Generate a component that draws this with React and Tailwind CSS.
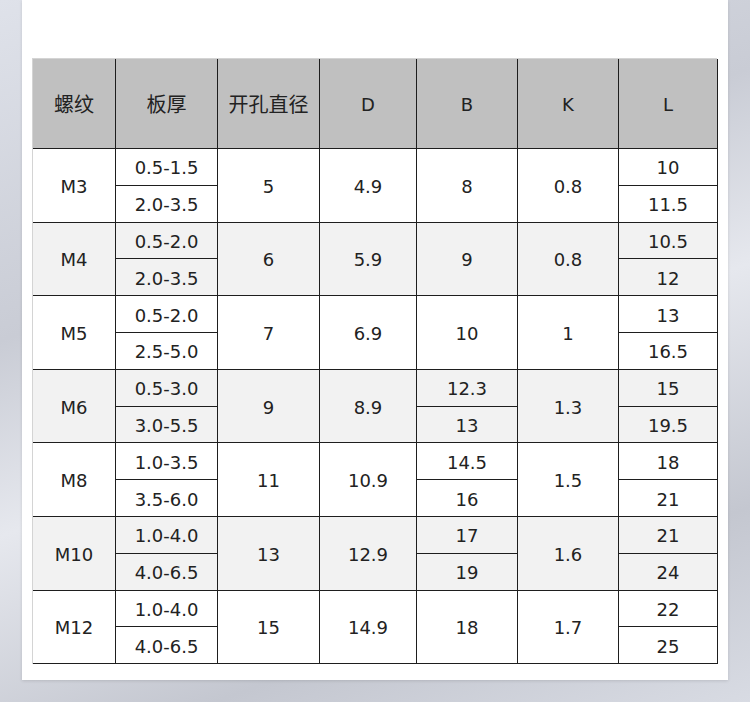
import React from "react";

const groups = [
  { m: "M3", t: ["0.5-1.5", "2.0-3.5"], h: "5", d: "4.9", b: ["8"], k: "0.8", l: ["10", "11.5"] },
  { m: "M4", t: ["0.5-2.0", "2.0-3.5"], h: "6", d: "5.9", b: ["9"], k: "0.8", l: ["10.5", "12"] },
  { m: "M5", t: ["0.5-2.0", "2.5-5.0"], h: "7", d: "6.9", b: ["10"], k: "1", l: ["13", "16.5"] },
  { m: "M6", t: ["0.5-3.0", "3.0-5.5"], h: "9", d: "8.9", b: ["12.3", "13"], k: "1.3", l: ["15", "19.5"] },
  { m: "M8", t: ["1.0-3.5", "3.5-6.0"], h: "11", d: "10.9", b: ["14.5", "16"], k: "1.5", l: ["18", "21"] },
  { m: "M10", t: ["1.0-4.0", "4.0-6.5"], h: "13", d: "12.9", b: ["17", "19"], k: "1.6", l: ["21", "24"] },
  { m: "M12", t: ["1.0-4.0", "4.0-6.5"], h: "15", d: "14.9", b: ["18"], k: "1.7", l: ["22", "25"] },
];

const heads = ["螺纹", "板厚", "开孔直径", "D", "B", "K", "L"];

function Cell({ children, span, bg }) {
  return (
    <div
      className={`${span ? "row-span-2" : ""} ${bg} flex items-center justify-center pt-[3px] border-r border-b border-[#1e1e1e] text-[18px] leading-none text-[#222]`}
    >
      {children}
    </div>
  );
}

export default function App() {
  const cells = [];
  heads.forEach((h, i) => {
    cells.push(
      <div
        key={"h" + i}
        className={`flex items-center justify-center pt-[3px] border-r border-b border-[#1e1e1e] bg-[#c0c0c0] leading-none text-[#222] ${i < 3 ? "text-[20px]" : "text-[18px]"}`}
      >
        {h}
      </div>
    );
  });
  groups.forEach((g, gi) => {
    const bg = gi % 2 === 1 ? "bg-[#f2f2f2]" : "bg-white";
    const bSplit = g.b.length === 2;
    cells.push(<Cell key={gi + "m"} span bg={bg}>{g.m}</Cell>);
    cells.push(<Cell key={gi + "t0"} bg={bg}>{g.t[0]}</Cell>);
    cells.push(<Cell key={gi + "h"} span bg={bg}>{g.h}</Cell>);
    cells.push(<Cell key={gi + "d"} span bg={bg}>{g.d}</Cell>);
    cells.push(<Cell key={gi + "b0"} span={!bSplit} bg={bg}>{g.b[0]}</Cell>);
    cells.push(<Cell key={gi + "k"} span bg={bg}>{g.k}</Cell>);
    cells.push(<Cell key={gi + "l0"} bg={bg}>{g.l[0]}</Cell>);
    cells.push(<Cell key={gi + "t1"} bg={bg}>{g.t[1]}</Cell>);
    if (bSplit) cells.push(<Cell key={gi + "b1"} bg={bg}>{g.b[1]}</Cell>);
    cells.push(<Cell key={gi + "l1"} bg={bg}>{g.l[1]}</Cell>);
  });

  return (
    <div
      className="w-[750px] h-[702px] overflow-hidden bg-[linear-gradient(160deg,#dfe2ea_0%,#c9ccd5_35%,#e6e8ee_55%,#c4c7d0_80%,#d8dbe3_100%)]"
      style={{ fontFamily: '"DejaVu Sans", "Noto Sans CJK SC", sans-serif' }}
    >
      <div className="ml-[22px] w-[706px] h-[680px] bg-white pt-[58px] pl-[10px] shadow-[0_1px_3px_rgba(0,0,0,0.12)]">
        <div className="grid w-[685px] grid-cols-[83px_102px_102px_97px_101px_101px_99px] grid-rows-[90px_repeat(14,36.8px)] border-l border-t border-[#d4d4d4]">
          {cells}
        </div>
      </div>
    </div>
  );
}
